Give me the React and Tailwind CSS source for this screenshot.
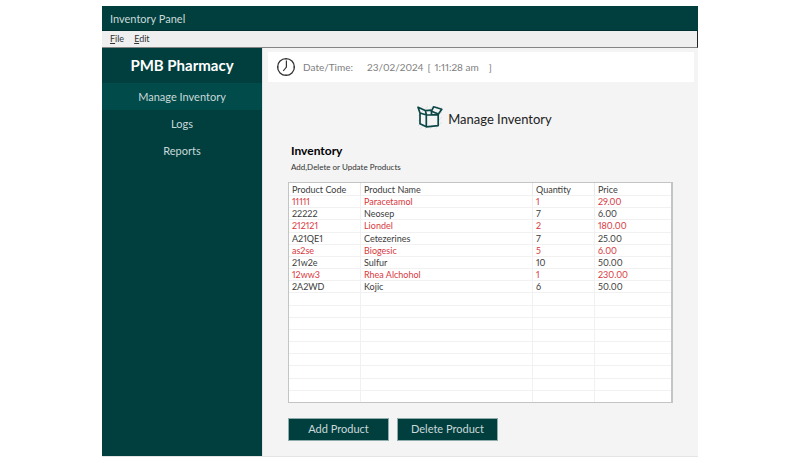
const NAV_ITEMS = ["Manage Inventory", "Logs", "Reports"];

const PRODUCTS = [
  { code: "11111", name: "Paracetamol", quantity: 1, price: "29.00", low: true },
  { code: "22222", name: "Neosep", quantity: 7, price: "6.00", low: false },
  { code: "212121", name: "Liondel", quantity: 2, price: "180.00", low: true },
  { code: "A21QE1", name: "Cetezerines", quantity: 7, price: "25.00", low: false },
  { code: "as2se", name: "Biogesic", quantity: 5, price: "6.00", low: true },
  { code: "21w2e", name: "Sulfur", quantity: 10, price: "50.00", low: false },
  { code: "12ww3", name: "Rhea Alchohol", quantity: 1, price: "230.00", low: true },
  { code: "2A2WD", name: "Kojic", quantity: 6, price: "50.00", low: false },
];

const EMPTY_ROWS = 9;

function ClockIcon() {
  return (
    <svg viewBox="0 0 20 20" className="size-5 shrink-0" fill="none" stroke="#333" aria-hidden="true">
      <circle cx="10" cy="10" r="8.4" strokeWidth="1.3" />
      <path d="M10.4 3.4V10L7.2 14" strokeWidth="1.2" />
      <path d="M10 1.5v1.4M18.4 10H17M10 18.4V17M1.6 10H3" strokeWidth="0.7" />
    </svg>
  );
}

function BoxIcon() {
  return (
    <svg viewBox="0 0 26 24" className="h-6 w-[26px] shrink-0" fill="none" aria-hidden="true">
      <path
        d="M1 6 6 1M1 11 11 1M1 16 16 1M1 21 21 1M3 24 25 2M8 24 25 7M13 24 25 12M18 24 25 17"
        stroke="#dcdede"
        strokeWidth="0.8"
      />
      <path d="M3 8 9.3 10V21.8L3 18.8ZM9.3 10 21.2 9.6V20.6L9.3 21.8Z" fill="#f4f4f4" />
      <path
        d="M1 2.2 8.3 5.6 9.5 10 3 8ZM3 8V18.8L9.3 21.8V10L21.2 9.6V20.6L9.3 21.8M8.3 5.6 14.5 5.2M14.5 5.2V9.6"
        stroke="#0b4746"
        strokeWidth="1.7"
        strokeLinejoin="round"
      />
      <path
        d="M16.6 1.8 24.8 4.2 21.4 9 14.5 6.2Z"
        fill="#f4f4f4"
        stroke="#0b4746"
        strokeWidth="1.7"
        strokeLinejoin="round"
      />
    </svg>
  );
}

function Sidebar() {
  return (
    <aside className="w-40 shrink-0 bg-[#013f3f] text-center">
      <div className="flex h-[35px] items-center justify-center text-[15px] font-bold text-white">
        PMB Pharmacy
      </div>
      <nav className="flex flex-col">
        {NAV_ITEMS.map((item, index) => (
          <button
            key={item}
            type="button"
            className={
              index === 0
                ? "h-[27px] bg-[#014b4a] pt-0.5 text-[11px] text-[#c9d9d8]"
                : "h-[27px] pt-0.5 text-[11px] text-[#c9d9d8]"
            }
          >
            {item}
          </button>
        ))}
      </nav>
    </aside>
  );
}

function ProductTable() {
  return (
    <div className="h-[221px] border border-r-2 border-[#c2c4c5] bg-white">
      <table className="h-full w-full table-fixed border-separate border-spacing-0 text-left text-[9px] leading-[11px] text-[#3c3c3c] [&_td]:h-3 [&_td]:border-t [&_td]:border-t-[#f1f1f1] [&_td]:px-[3px] [&_td]:py-0 [&_td+td]:border-l [&_td+td]:border-l-[#f1f1f1] [&_th]:h-3 [&_th]:px-[3px] [&_th]:py-0 [&_th]:font-normal [&_th+th]:border-l [&_th+th]:border-l-[#e9e9e9]">
        <colgroup>
          <col className="w-[71px]" />
          <col />
          <col className="w-[62px]" />
          <col className="w-[77px]" />
        </colgroup>
        <thead>
          <tr>
            <th scope="col">Product Code</th>
            <th scope="col">Product Name</th>
            <th scope="col">Quantity</th>
            <th scope="col">Price</th>
          </tr>
        </thead>
        <tbody>
          {PRODUCTS.map((product) => (
            <tr key={product.code} className={product.low ? "text-[#d9383e]" : undefined}>
              <td>{product.code}</td>
              <td>{product.name}</td>
              <td>{product.quantity}</td>
              <td>{product.price}</td>
            </tr>
          ))}
          {Array.from({ length: EMPTY_ROWS }, (_, index) => (
            <tr key={index}>
              <td />
              <td />
              <td />
              <td />
            </tr>
          ))}
        </tbody>
      </table>
    </div>
  );
}

export default function App() {
  return (
    <div className="min-h-screen bg-white px-4 py-1.5 font-['Century_Gothic','Lato',sans-serif] proportional-nums">
      <div className="mx-auto w-full max-w-[596px] border-b border-[#e4e4e4]">
        <header className="flex h-[25px] items-center border-b border-[#022f2f] bg-[#013f3f] px-2 pt-0.5 text-[11px] text-[#c9d9d8]">
          Inventory Panel
        </header>
        <div className="flex h-[17px] items-center gap-2.5 border-r border-b border-r-[#222] border-b-[#858585] bg-[#efefef] px-2 text-[9px] text-[#333]">
          <button type="button">
            <span className="underline">F</span>ile
          </button>
          <button type="button">
            <span className="underline">E</span>dit
          </button>
        </div>
        <div className="flex">
          <Sidebar />
          <main className="min-w-0 flex-1 border-l border-[#e0e4e4] bg-[#f4f4f4] pt-1 pb-[15px]">
            <div className="mr-1 ml-[5px] flex h-[30px] items-center bg-white pl-2 text-[10px] text-[#808080]">
              <ClockIcon />
              <span className="ml-[7px] w-16">Date/Time:</span>
              <span className="flex">
                <span>23/02/2024</span>
                <span className="ml-1">[</span>
                <span className="ml-1">1:11:28 am</span>
                <span className="ml-2.5">]</span>
              </span>
            </div>
            <section className="px-[25px] pt-[23px]">
              <div className="flex items-center justify-center gap-[5px] pl-2">
                <BoxIcon />
                <h1 className="pt-1 text-[13px] leading-5 text-[#222]">Manage Inventory</h1>
              </div>
              <h2 className="mt-3.5 pl-[3px] text-xs leading-4 font-bold text-black">Inventory</h2>
              <p className="mb-[7px] pl-[3px] text-[8px] leading-4 text-[#333]">Add,Delete or Update Products</p>
              <ProductTable />
              <div className="mt-[15px] flex gap-2 text-[11px] text-[#c9d9d8]">
                <button type="button" className="h-[23px] w-[101px] border border-[#8fadac] bg-[#013f3f]">
                  Add Product
                </button>
                <button type="button" className="h-[23px] w-[101px] border border-[#8fadac] bg-[#013f3f]">
                  Delete Product
                </button>
              </div>
            </section>
          </main>
        </div>
      </div>
    </div>
  );
}
